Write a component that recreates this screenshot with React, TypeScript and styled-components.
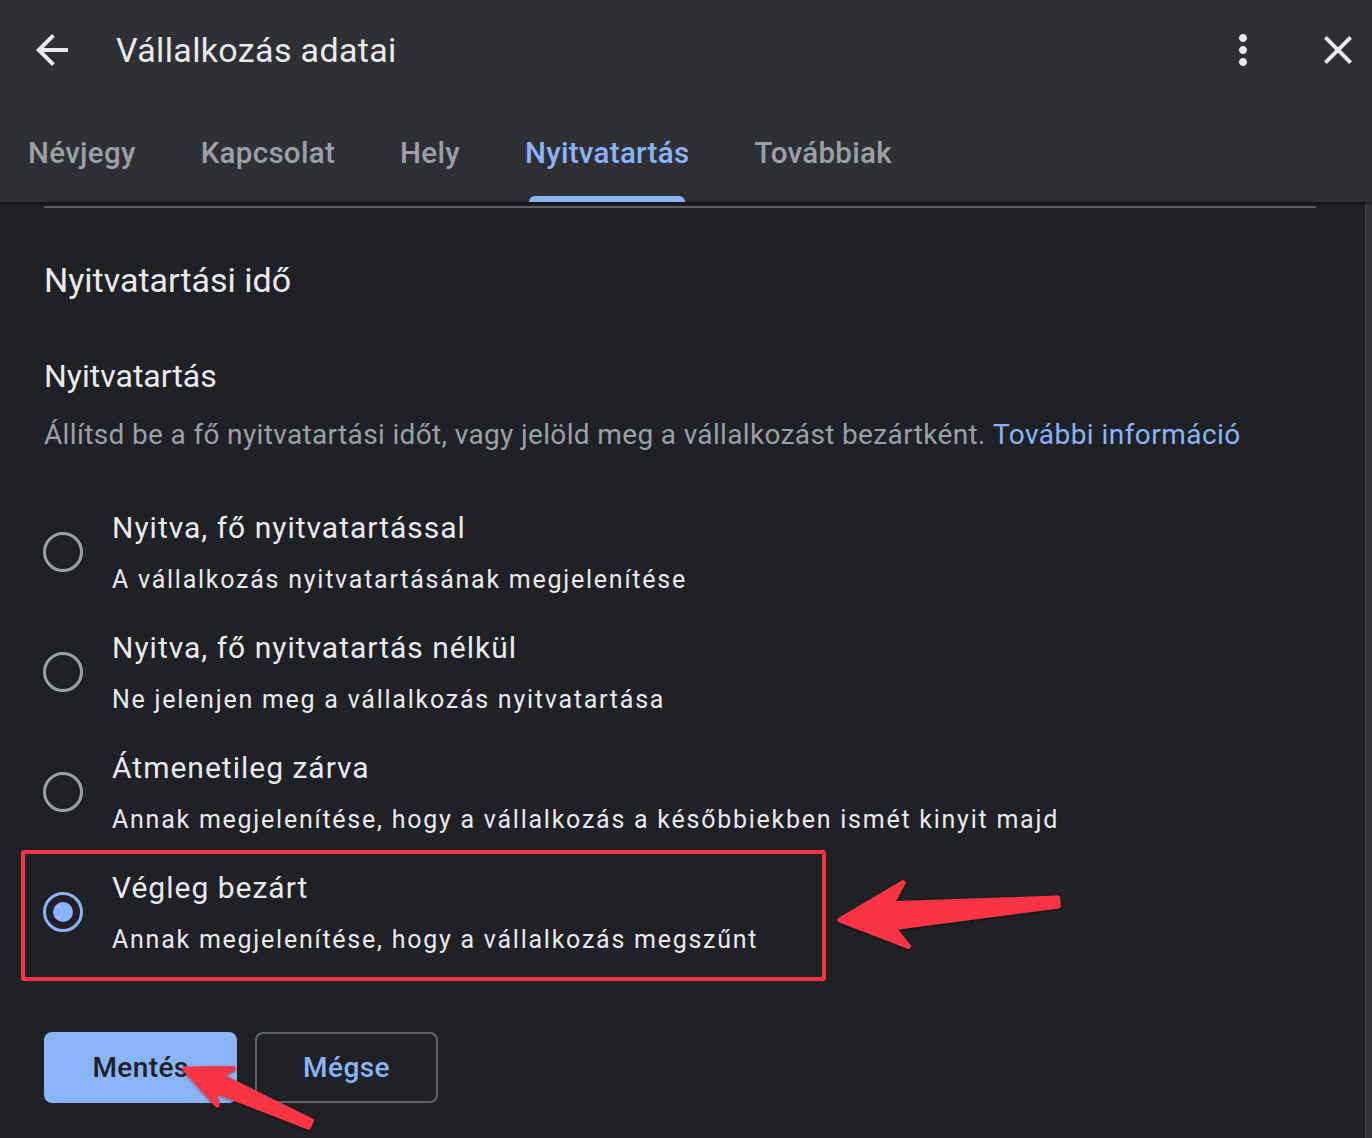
import React, { useState } from 'react';
import styled, { createGlobalStyle } from 'styled-components';

const GlobalStyle = createGlobalStyle`
    html, body {
        margin: 0;
        padding: 0;
        background: #202124;
    }
    body {
        font-family: Roboto, 'Noto Sans', Arial, sans-serif;
        -webkit-font-smoothing: antialiased;
    }
`;

const TABS = ['Névjegy', 'Kapcsolat', 'Hely', 'Nyitvatartás', 'Továbbiak'];

const OPTIONS = [
    { id: 'open', title: 'Nyitva, fő nyitvatartással', sub: 'A vállalkozás nyitvatartásának megjelenítése' },
    { id: 'nohours', title: 'Nyitva, fő nyitvatartás nélkül', sub: 'Ne jelenjen meg a vállalkozás nyitvatartása' },
    { id: 'temp', title: 'Átmenetileg zárva', sub: 'Annak megjelenítése, hogy a vállalkozás a későbbiekben ismét kinyit majd' },
    { id: 'closed', title: 'Végleg bezárt', sub: 'Annak megjelenítése, hogy a vállalkozás megszűnt' },
];

// annotation arrows: tail -> tip, head length / half width, shaft half widths
const ARROWS = [
    { tail: [745, 23], tip: [645, 133], head: 50, wing: 24, base: 8, end: 4 },
    { tail: [1058, 902], tip: [840, 920], head: 66, wing: 32, base: 12, end: 4 },
    { tail: [310, 1124], tip: [185, 1069], head: 44, wing: 20, base: 8, end: 3.5 },
];

const arrowPoints = (a: (typeof ARROWS)[number]) => {
    const [tx, ty] = a.tail;
    const [px, py] = a.tip;
    const len = Math.hypot(px - tx, py - ty);
    const ux = (px - tx) / len;
    const uy = (py - ty) / len;
    const nx = -uy;
    const ny = ux;
    const at = (d: number, w: number) => `${px - ux * d + nx * w},${py - uy * d + ny * w}`;
    return [
        at(0, 0),
        at(a.head, a.wing),
        at(a.head * 0.8, a.base),
        at(len, a.end),
        at(len, -a.end),
        at(a.head * 0.8, -a.base),
        at(a.head, -a.wing),
    ].join(' ');
};

const BackIcon = () => (
    <svg width="48" height="48" viewBox="0 0 24 24" fill="#e8eaed">
        <path d="M20 11H7.83l5.59-5.59L12 4l-8 8 8 8 1.41-1.41L7.83 13H20v-2z" />
    </svg>
);

const MoreIcon = () => (
    <svg width="48" height="48" viewBox="0 0 24 24" fill="#e8eaed">
        <path d="M12 8c1.1 0 2-.9 2-2s-.9-2-2-2-2 .9-2 2 .9 2 2 2zm0 2c-1.1 0-2 .9-2 2s.9 2 2 2 2-.9 2-2-.9-2-2-2zm0 6c-1.1 0-2 .9-2 2s.9 2 2 2 2-.9 2-2-.9-2-2-2z" />
    </svg>
);

const CloseIcon = () => (
    <svg width="48" height="48" viewBox="0 0 24 24" fill="#e8eaed">
        <path d="M19 6.41L17.59 5 12 10.59 6.41 5 5 6.41 10.59 12 5 17.59 6.41 19 12 13.41 17.59 19 19 17.59 13.41 12z" />
    </svg>
);

const App: React.FC = () => {
    const [tab, setTab] = useState('Nyitvatartás');
    const [choice, setChoice] = useState('closed');

    return (
        <>
            <GlobalStyle />
            <Page>
                <Header>
                    <TopBar>
                        <IconButton aria-label="Vissza">
                            <BackIcon />
                        </IconButton>
                        <Title>Vállalkozás adatai</Title>
                        <TopActions>
                            <IconButton aria-label="Továbbiak">
                                <MoreIcon />
                            </IconButton>
                            <IconButton aria-label="Bezárás">
                                <CloseIcon />
                            </IconButton>
                        </TopActions>
                    </TopBar>
                    <TabRow>
                        {TABS.map((t) => (
                            <Tab key={t} $active={t === tab} onClick={() => setTab(t)}>
                                {t}
                            </Tab>
                        ))}
                    </TabRow>
                </Header>

                <Body>
                    <Content>
                        <Divider />
                        <SectionTitle>Nyitvatartási idő</SectionTitle>
                        <Label>Nyitvatartás</Label>
                        <Description>
                            Állítsd be a fő nyitvatartási időt, vagy jelöld meg a vállalkozást bezártként.{' '}
                            <Link href="#">További információ</Link>
                        </Description>

                        <OptionList>
                            {OPTIONS.map((o) => (
                                <Option key={o.id} onClick={() => setChoice(o.id)}>
                                    <Radio $checked={choice === o.id} />
                                    <OptionText>
                                        <OptionTitle>{o.title}</OptionTitle>
                                        <OptionSub>{o.sub}</OptionSub>
                                    </OptionText>
                                </Option>
                            ))}
                        </OptionList>

                        <Actions>
                            <PrimaryButton>Mentés</PrimaryButton>
                            <OutlineButton>Mégse</OutlineButton>
                        </Actions>
                    </Content>
                    <ScrollTrack />
                </Body>

                <Highlight />
                <Annotations width="1372" height="1138" viewBox="0 0 1372 1138">
                    <defs>
                        <filter id="arrowShadow" x="-10%" y="-10%" width="120%" height="120%">
                            <feDropShadow dx="0" dy="1" stdDeviation="1.5" floodColor="#000" floodOpacity="0.45" />
                        </filter>
                    </defs>
                    {ARROWS.map((a, i) => (
                        <polygon
                            key={i}
                            points={arrowPoints(a)}
                            fill="#f93444"
                            stroke="#f93444"
                            strokeWidth="5"
                            strokeLinejoin="round"
                            filter="url(#arrowShadow)"
                        />
                    ))}
                </Annotations>
            </Page>
        </>
    );
};

export default App;

const Page = styled.div`
    position: relative;
    width: 1372px;
    height: 1138px;
    overflow: hidden;
    display: flex;
    flex-direction: column;
    background: #202124;
`;

const Header = styled.header`
    height: 202px;
    flex-shrink: 0;
    background: #2f3034;
    box-shadow: 0 2px 3px rgba(0, 0, 0, 0.45);
    display: flex;
    flex-direction: column;
    position: relative;
    z-index: 1;
`;

const TopBar = styled.div`
    height: 100px;
    display: flex;
    align-items: center;
    padding: 0 10px 0 28px;
`;

const IconButton = styled.button`
    width: 48px;
    height: 48px;
    padding: 0;
    border: none;
    background: none;
    display: flex;
    align-items: center;
    justify-content: center;
    cursor: pointer;
`;

const Title = styled.h1`
    margin: 0 0 0 40px;
    font-size: 34px;
    font-weight: 400;
    color: #e8eaed;
    letter-spacing: 0.35px;
`;

const TopActions = styled.div`
    margin-left: auto;
    display: flex;
    gap: 47px;
`;

const TabRow = styled.nav`
    flex: 1;
    display: flex;
    gap: 65px;
    padding-left: 28px;
`;

const Tab = styled.button<{ $active?: boolean }>`
    position: relative;
    border: none;
    background: none;
    padding: 4px 2px 0;
    margin: 0 -2px;
    font-family: Roboto, 'Noto Sans', Arial, sans-serif;
    font-size: 29.5px;
    font-weight: 500;
    letter-spacing: 0.3px;
    color: ${(p) => (p.$active ? '#8ab4f8' : '#9aa0a6')};
    cursor: pointer;
    &::after {
        content: '';
        display: ${(p) => (p.$active ? 'block' : 'none')};
        position: absolute;
        left: 6px;
        right: 6px;
        bottom: 0;
        height: 6px;
        border-radius: 6px 6px 0 0;
        background: #8ab4f8;
    }
`;

const Body = styled.div`
    flex: 1;
    display: flex;
`;

const Content = styled.main`
    flex: 1;
    padding: 4px 49px 0 44px;
    display: flex;
    flex-direction: column;
    align-items: flex-start;
`;

const ScrollTrack = styled.div`
    width: 6px;
    border-left: 1px solid #46474a;
    background: #333436;
`;

const Divider = styled.div`
    align-self: stretch;
    height: 2px;
    background: #5f6368;
`;

const SectionTitle = styled.h2`
    margin: 52px 0 0;
    font-size: 34px;
    line-height: 40px;
    font-weight: 400;
    color: #e8eaed;
`;

const Label = styled.h3`
    margin: 57px 0 0;
    font-size: 32px;
    line-height: 38px;
    font-weight: 400;
    color: #e8eaed;
`;

const Description = styled.p`
    margin: 23px 0 0;
    font-size: 28px;
    line-height: 34px;
    letter-spacing: 0.35px;
    color: #9aa0a6;
`;

const Link = styled.a`
    color: #8ab4f8;
    text-decoration: none;
    letter-spacing: 0.45px;
`;

const OptionList = styled.div`
    margin-top: 46px;
    display: flex;
    flex-direction: column;
`;

const Option = styled.label`
    display: flex;
    align-items: center;
    gap: 29px;
    height: 120px;
    box-sizing: border-box;
    padding: 8px 0 20px;
    cursor: pointer;
`;

const Radio = styled.span<{ $checked?: boolean }>`
    flex-shrink: 0;
    width: 40px;
    height: 40px;
    margin-left: -1px;
    box-sizing: border-box;
    border-radius: 50%;
    border: 3px solid ${(p) => (p.$checked ? '#8ab4f8' : '#9aa0a6')};
    display: flex;
    align-items: center;
    justify-content: center;
    &::before {
        content: '';
        display: ${(p) => (p.$checked ? 'block' : 'none')};
        width: 20px;
        height: 20px;
        border-radius: 50%;
        background: #8ab4f8;
    }
`;

const OptionText = styled.div`
    display: flex;
    flex-direction: column;
`;

const OptionTitle = styled.div`
    font-size: 30px;
    line-height: 44px;
    letter-spacing: 1px;
    color: #e8eaed;
`;

const OptionSub = styled.div`
    margin-top: 12px;
    font-size: 25px;
    line-height: 36px;
    letter-spacing: 1.75px;
    color: #e8eaed;
`;

const Actions = styled.div`
    margin-top: 54px;
    display: flex;
    gap: 18px;
`;

const PrimaryButton = styled.button`
    width: 193px;
    height: 71px;
    border: none;
    border-radius: 8px;
    background: #8ab4f8;
    color: #202124;
    font-family: Roboto, 'Noto Sans', Arial, sans-serif;
    font-size: 28px;
    font-weight: 500;
    letter-spacing: 0.4px;
    cursor: pointer;
`;

const OutlineButton = styled.button`
    width: 183px;
    height: 71px;
    border: 2px solid #5f6368;
    border-radius: 8px;
    background: transparent;
    color: #8ab4f8;
    font-family: Roboto, 'Noto Sans', Arial, sans-serif;
    font-size: 28px;
    font-weight: 500;
    letter-spacing: 0.4px;
    cursor: pointer;
`;

const Highlight = styled.div`
    position: absolute;
    left: 21px;
    top: 850px;
    width: 805px;
    height: 131px;
    box-sizing: border-box;
    border: 4px solid #f93444;
    border-radius: 3px;
    pointer-events: none;
`;

const Annotations = styled.svg`
    position: absolute;
    left: 0;
    top: 0;
    pointer-events: none;
`;
